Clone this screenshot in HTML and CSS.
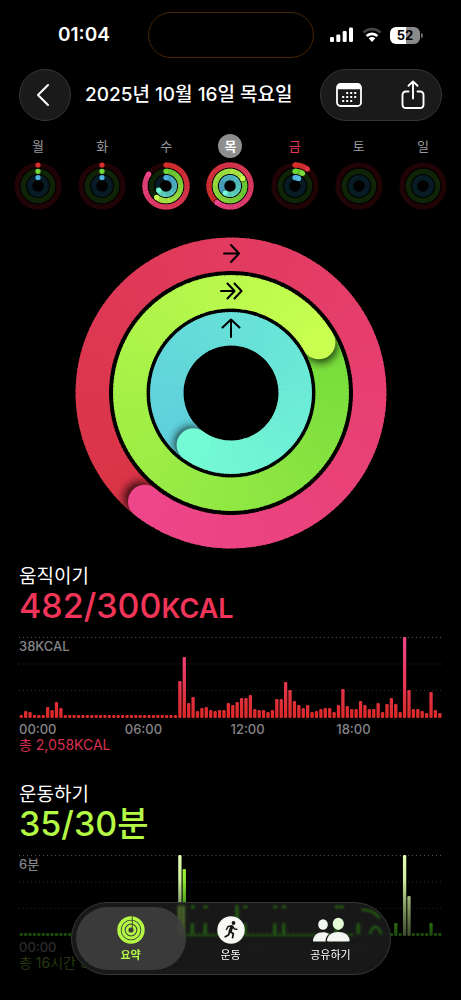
FILE: index.html
```html
<!DOCTYPE html>
<html lang="ko">
<head>
<meta charset="utf-8">
<meta name="viewport" content="width=device-width, initial-scale=1">
<title>활동 요약</title>
<link rel="stylesheet" href="styles.css">
</head>
<body>
<div class="app">
  <div class="status">
    <span class="clock">01:04</span>
    <span class="island"></span>
    <span class="indicators">
      <svg class="signal" width="24" height="16" viewBox="0 0 24 16" aria-hidden="true">
        <rect x="0" y="10" width="4" height="5" rx="1.3"/><rect x="6.3" y="7.5" width="4" height="7.5" rx="1.3"/><rect x="12.7" y="4" width="4" height="11" rx="1.3"/><rect x="19" y="0.5" width="4" height="14.500" rx="1.3"/>
      </svg>
      <svg class="wifi" width="20" height="16" viewBox="0 0 20 16" aria-hidden="true">
        <path d="M1.400 5.600A12.300 12.300 0 0 1 18.600 5.600" fill="none" stroke="#444" stroke-width="2.600"/>
        <path d="M4.600 9A7.700 7.700 0 0 1 15.400 9" fill="none" stroke="#fff" stroke-width="2.700"/>
        <path d="M6.600 11.300A4.900 4.900 0 0 1 13.400 11.300L10 15Z" fill="#fff"/>
      </svg>
      <span class="battery"><span class="battery-body">52</span><span class="battery-tip"></span></span>
    </span>
  </div>

  <header class="header">
    <button class="glass back" type="button" aria-label="뒤로">
      <svg width="14" height="24" viewBox="0 0 14 24" fill="none" stroke="#fff" stroke-width="2" stroke-linecap="round" stroke-linejoin="round"><path d="M12 2L2 12L12 22"/></svg>
    </button>
    <h1 class="date">2025년 10월 16일 목요일</h1>
    <div class="glass actions">
      <button class="action" type="button" aria-label="달력">
        <svg width="26" height="24" viewBox="0 0 26 24">
          <rect x="1" y="1" width="24" height="22" rx="3.500" fill="none" stroke="#fff" stroke-width="1.800"/>
          <path d="M1 6.300V4Q1 1 4 1H22Q25 1 25 4V6.300Z" fill="#fff"/>
          <g fill="#fff"><rect x="10.200" y="9" width="2" height="2"/><rect x="14.200" y="9" width="2" height="2"/><rect x="18.200" y="9" width="2" height="2"/><rect x="6.200" y="13" width="2" height="2"/><rect x="10.200" y="13" width="2" height="2"/><rect x="14.200" y="13" width="2" height="2"/><rect x="18.200" y="13" width="2" height="2"/><rect x="6.200" y="17" width="2" height="2"/><rect x="10.200" y="17" width="2" height="2"/><rect x="14.200" y="17" width="2" height="2"/></g>
        </svg>
      </button>
      <button class="action" type="button" aria-label="공유">
        <svg class="share" width="24" height="30" viewBox="0 0 24 30" fill="none" stroke="#fff" stroke-width="1.900" stroke-linecap="round" stroke-linejoin="round"><path d="M7.500 11.500H5Q1.500 11.500 1.500 15V24.500Q1.500 28 5 28H19Q22.500 28 22.500 24.500V15Q22.500 11.500 19 11.500H16.500M12 18.500V1.500M7.500 5.800L12 1.400L16.500 5.800"/></svg>
      </button>
    </div>
  </header>

  <nav class="week" aria-label="요일">
    <button class="day" type="button"><span class="day-name">월</span><svg class="mini" viewBox="0 0 48 48" data-rings="0,0,0"></svg></button>
    <button class="day" type="button"><span class="day-name">화</span><svg class="mini" viewBox="0 0 48 48" data-rings="0,0,0"></svg></button>
    <button class="day" type="button"><span class="day-name">수</span><svg class="mini" viewBox="0 0 48 48" data-rings="0.845,0.61,0.67"></svg></button>
    <button class="day selected" type="button" aria-current="date"><span class="day-name">목</span><svg class="mini" viewBox="0 0 48 48" data-rings="1.607,1.167,1.6"></svg></button>
    <button class="day today" type="button"><span class="day-name">금</span><svg class="mini" viewBox="0 0 48 48" data-rings="0.1,0.085,0.07"></svg></button>
    <button class="day" type="button"><span class="day-name">토</span><svg class="mini" viewBox="0 0 48 48" data-rings=""></svg></button>
    <button class="day" type="button"><span class="day-name">일</span><svg class="mini" viewBox="0 0 48 48" data-rings=""></svg></button>
  </nav>

  <main>
    <svg class="rings" viewBox="0 0 312 312" data-rings="1.607,1.167,1.6" role="img" aria-label="활동 링"></svg>

    <section class="metric move">
      <h2 class="metric-name">움직이기</h2>
      <p class="metric-value">482/300<span class="unit">KCAL</span></p>
      <div class="chart">
        <span class="chart-max">38KCAL</span>
        <svg class="plot" viewBox="0 0 422 82" preserveAspectRatio="none" data-chart="move"></svg>
      </div>
      <div class="axis"><span>00:00</span><span>06:00</span><span>12:00</span><span>18:00</span></div>
      <p class="total">총 2,058KCAL</p>
    </section>

    <section class="metric exercise">
      <h2 class="metric-name">운동하기</h2>
      <p class="metric-value">35/30분</p>
      <div class="chart">
        <span class="chart-max">6분</span>
        <svg class="plot" viewBox="0 0 422 82" preserveAspectRatio="none" data-chart="exercise"></svg>
      </div>
      <div class="axis"><span>00:00</span><span>06:00</span><span>12:00</span><span>18:00</span></div>
      <p class="total">총 16시간 35분</p>
    </section>
  </main>

  <div class="fade"></div>
  <nav class="tabs" aria-label="탭">
    <svg class="glints" viewBox="0 0 320 73" preserveAspectRatio="none" fill="none" stroke="#2c8a0e" stroke-linecap="round" aria-hidden="true">
      <path d="M121 4H122M134 4H135M174 4H175M204 4H205M213 4H214M266 4H267M271 4H272" stroke-width="3.500"/>
      <path d="M166 3V20M121 22V31M134 22V31M157 22V31M174 22V31M204 22V31M213 22V31M266 22V31M288 22V31" stroke-width="3"/>
      <path d="M110 33H284" stroke-width="3" stroke-dasharray="0.500 4"/>
      <path d="M108 4V30M112 4V30" stroke="#6f9c38" stroke-width="3"/>
      <path d="M300 31Q305 18 311 31M292 7Q303 7 309 15" stroke-width="2.500"/>
    </svg>
    <a class="tab active" href="#summary" aria-current="page">
      <svg width="28" height="28" viewBox="0 0 28 28" fill="none" stroke="#b4f944">
        <circle cx="14" cy="14" r="12" stroke-width="3.400"/><circle cx="14" cy="14" r="7.900" stroke-width="3"/><circle cx="14" cy="14" r="4" stroke-width="2.800"/>
        <path d="M15.300 0.500V13" stroke="#39401f" stroke-width="0.900"/>
      </svg>
      <span>요약</span>
    </a>
    <a class="tab" href="#workout">
      <svg width="28" height="28" viewBox="0 0 28 28">
        <circle cx="14" cy="14" r="13.700" fill="#f7f9f5"/>
        <circle cx="16.500" cy="7" r="1.900" fill="#151515"/>
        <g fill="none" stroke="#151515" stroke-linecap="round" stroke-linejoin="round"><path d="M14.800 10.700L13.200 15.200" stroke-width="3.200"/><path d="M14.500 10L11 10.500L9.500 13.500M16 10.700L17.300 13L19.800 13.300" stroke-width="1.500"/><path d="M13.300 15.500L16.300 17.700L15.600 21.600M12.600 15.800L11.500 19L8.200 20.700" stroke-width="1.800"/></g>
      </svg>
      <span>운동</span>
    </a>
    <a class="tab" href="#sharing">
      <svg width="38" height="28" viewBox="0 0 38 28" fill="#f4f7f1">
        <ellipse cx="11" cy="8.500" rx="4.800" ry="5.300"/><path d="M1 25.500C1 19.500 5.500 16.300 11 16.300C13.500 16.300 15.300 16.900 17 17.800C14.700 19.800 13.500 22.500 13.600 25.500H2.500Q1 25.500 1 25.500Z"/>
        <ellipse cx="26.300" cy="7.800" rx="5.600" ry="6.100" fill="#e4fbd6"/><path d="M15 24.300C15.300 19.500 20 16 26.300 16C32.700 16 37.300 19.500 37.600 24.300Q37.600 25.500 36.200 25.500H16.300Q15 25.500 15 24.300Z"/>
      </svg>
      <span>공유하기</span>
    </a>
  </nav>
</div>
<script src="app.js"></script>
</body>
</html>
```
FILE: styles.css
```css
* { box-sizing: border-box; }
body { margin: 0; background: #000; color: #fff; font-family: Inter, "Noto Sans CJK KR", sans-serif; }
h1, h2, p { margin: 0; }
button { border: 0; padding: 0; background: none; color: inherit; font: inherit; }
svg { display: block; }

.app { min-height: 100vh; }

.status { display: grid; grid-template-columns: 1fr 166px 1fr; height: 69px; padding-top: 12px; align-items: start; }
.clock { padding-left: 58px; font-size: 19px; line-height: 46px; font-weight: 600; }
.island { height: 46px; border: 1px solid #4a2604; border-radius: 23px; }
.indicators { display: flex; align-items: center; justify-content: flex-end; gap: 8px; height: 46px; padding-right: 38px; }
.signal { fill: #fff; }
.battery { display: flex; align-items: center; gap: 1px; }
.battery-body { width: 30px; height: 17px; border-radius: 6px; background: linear-gradient(90deg, #fff 52%, #8a8a8a 52%); color: #000; font-size: 13px; line-height: 17px; font-weight: 700; text-align: center; }
.battery-tip { width: 2px; height: 5px; border-radius: 0 2px 2px 0; background: #666; }

.header { display: flex; align-items: center; gap: 14px; padding: 0 19px; }
.glass { height: 52px; background: #1a1a1a; border: 1px solid #353535; border-radius: 26px; }
.back { width: 52px; display: grid; place-items: center; padding-right: 4px; }
.date { font-size: 19px; line-height: 28px; font-weight: 500; white-space: nowrap; }
.actions { display: grid; grid-template-columns: 1fr 1fr; width: 122px; margin-left: auto; }
.action { display: grid; place-items: center; padding-right: 4px; }
.action + .action { padding: 0 0 0 4px; }

.week { display: grid; grid-template-columns: repeat(7, 1fr); padding: 13px 6px 0; }
.day { display: flex; flex-direction: column; align-items: center; gap: 4px; color: #98989d; font-size: 13px; }
.day-name { width: 24px; line-height: 24px; border-radius: 12px; }
.mini { width: 48px; height: 48px; }
.selected .day-name { background: #8e8e8e; color: #fff; font-weight: 600; }
.today .day-name { color: #e8335a; }

.rings { width: 312px; margin: 27px auto 16px; }

.metric { padding: 0 19px; margin-bottom: 30px; }
.metric-name { font-size: 19px; line-height: 24px; font-weight: 400; }
.metric-value { font-size: 34px; line-height: 34px; height: 34px; font-weight: 500; margin-bottom: 14px; }
.unit { font-size: 27px; font-weight: 600; }
.move .metric-value { color: #f03558; }
.move .total { color: #d92f52; }
.exercise .metric-value { color: #b4f944; }
.exercise .total { color: #8dc63a; }
.chart { position: relative; }
.chart-max { position: absolute; top: 1px; left: 0; font-size: 13px; line-height: 16px; font-weight: 500; color: #858589; }
.plot { width: 100%; height: 82px; }
.axis { display: grid; grid-template-columns: repeat(4, 1fr); margin-top: 2px; font-size: 13px; line-height: 16px; font-weight: 500; color: #858589; }
.total { font-size: 14px; line-height: 16px; }

.fade { position: fixed; inset: auto 0 0; height: 120px; background: linear-gradient(transparent, rgba(0, 0, 0, .68) 50%, rgba(0, 0, 0, .8)); pointer-events: none; }
.tabs { position: fixed; bottom: 25px; left: 0; right: 0; width: 320px; height: 73px; margin: 0 auto; padding: 4px; display: grid; grid-template-columns: 110px 1fr 110px; background: rgba(27, 27, 27, .9); border: 1px solid #343b31; border-radius: 37px; backdrop-filter: blur(2px); }
.glints { position: absolute; inset: 0; width: 100%; height: 100%; filter: blur(1px); opacity: .6; }
.tab { position: relative; display: flex; flex-direction: column; align-items: center; padding-top: 9px; gap: 3px; color: #fff; font-size: 11px; line-height: 16px; text-decoration: none; }
.active { background: rgba(62, 62, 62, .9); border-radius: 32px; color: #b4f944; font-weight: 600; }
```
FILE: app.js
```js
const NS = "http://www.w3.org/2000/svg";

function add(parent, name, attrs) {
  const node = document.createElementNS(NS, name);
  for (const key in attrs) node.setAttribute(key, attrs[key]);
  parent.appendChild(node);
  return node;
}

const PALETTE = [
  { from: [217, 47, 42], to: [238, 70, 138], track: "#1f0305" },
  { from: [110, 216, 56], to: [200, 255, 80], track: "#0f2406" },
  { from: [80, 178, 226], to: [116, 250, 212], track: "#071b24" }
];

function mix(a, b, t) {
  return "rgb(" + a.map((v, i) => Math.round(v + (b[i] - v) * t)).join(",") + ")";
}

function point(c, r, turn) {
  const a = turn * 2 * Math.PI;
  return [c + r * Math.sin(a), c - r * Math.cos(a)];
}

let clipCount = 0;

function drawRing(svg, c, r, w, progress, colors) {
  const first = Math.max(0, progress - 1);
  const span = Math.max(0.5, progress - first);
  const shade = turn => mix(colors.from, colors.to, Math.min(1, (turn - first) / span));
  const arc = (a, b) => {
    const n = Math.max(1, Math.ceil((b - a) * 180));
    for (let i = 0; i < n; i++) {
      const s = a + (b - a) * i / n, e = Math.min(b, a + (b - a) * (i + 1) / n + 0.002);
      add(svg, "path", { d: `M${point(c, r, s)}A${r} ${r} 0 0 1 ${point(c, r, e)}`, fill: "none", stroke: shade(s), "stroke-width": w });
    }
  };
  const [sx, sy] = point(c, r, 0);
  if (progress <= 1) add(svg, "circle", { cx: sx, cy: sy, r: w / 2, fill: shade(0) });
  if (progress === 0) return;
  const split = Math.max(first, progress - 0.15);
  arc(first, Math.min(progress, split + 0.01));
  if (progress > 1) {
    const id = "band" + clipCount++;
    const clip = add(svg, "clipPath", { id });
    const o = r + w / 2, n = r - w / 2;
    add(clip, "path", {
      "clip-rule": "evenodd",
      d: `M${c - o} ${c}a${o} ${o} 0 1 0 ${2 * o} 0a${o} ${o} 0 1 0 ${-2 * o} 0M${c - n} ${c}a${n} ${n} 0 1 0 ${2 * n} 0a${n} ${n} 0 1 0 ${-2 * n} 0`
    });
    const group = add(svg, "g", { "clip-path": `url(#${id})` });
    const [hx, hy] = point(c, r, progress + 0.006);
    const shadow = add(group, "circle", { cx: hx, cy: hy, r: w / 2, fill: "#000", opacity: 0.75 });
    shadow.style.filter = `blur(${w / 8}px)`;
  }
  arc(split, progress);
  const [ex, ey] = point(c, r, progress);
  add(svg, "circle", { cx: ex, cy: ey, r: w / 2, fill: shade(progress) });
}

document.querySelectorAll(".mini").forEach(svg => {
  const values = svg.dataset.rings ? svg.dataset.rings.split(",").map(Number) : [];
  [21, 14.7, 8.4].forEach((r, i) => {
    add(svg, "circle", { cx: 24, cy: 24, r, fill: "none", stroke: PALETTE[i].track, "stroke-width": 5.2 });
    if (values.length) drawRing(svg, 24, r, 5.2, values[i], PALETTE[i]);
  });
});

const main = document.querySelector(".rings");
main.dataset.rings.split(",").map(Number).forEach((value, i) => {
  const colors = [
    { from: [217, 52, 68], to: [238, 70, 138] },
    { from: [118, 220, 60], to: [200, 255, 80] },
    { from: [94, 206, 220], to: [116, 250, 212] }
  ];
  drawRing(main, 156, [138.7, 101.2, 64.2][i], 33.4, value, colors[i]);
});
add(main, "path", {
  d: "M149 16.500H163.500M156 8L164 16.500L156 25M146 54H159M152.500 46.500L159.500 54L152.500 61.500M159.500 46.500L166.500 54L159.500 61.500M156 100V83M147.500 90.500L156 82.500L164.500 90.500",
  fill: "none", stroke: "#000", "stroke-width": 2, "stroke-linecap": "round", "stroke-linejoin": "round"
});

const move = [3, 7, 6, 3, 3, 3, 11, 8, 16, 10, ...Array(26).fill(3),
  37, 61, 15, 21, 7, 10, 11, 8, 7, 8, 8, 15, 13, 16, 20, 20, 23, 9, 8, 8, 6, 8, 19, 19, 36, 28, 17, 13, 10, 13,
  6, 7, 9, 10, 10, 6, 13, 29, 12, 9, 9, 17, 13, 9, 9, 15, 6, 14, 20, 14, 6, 81, 28, 9, 9, 7, 5, 26, 8, 5];
const exercise = Array(96).fill(3);
Object.entries({ 36: 81, 37: 67, 39: 13, 42: 13, 47: 13, 49: 27, 51: 13, 58: 13, 60: 13, 72: 13, 73: 13, 77: 13, 85: 13, 87: 81, 88: 40, 93: 13 })
  .forEach(([slot, height]) => { exercise[slot] = height; });

function drawChart(svg, values, stops, highlight) {
  const name = svg.dataset.chart;
  const defs = add(svg, "defs", {});
  const gradient = (id, list) => {
    const g = add(defs, "linearGradient", { id, gradientUnits: "userSpaceOnUse", x1: 0, y1: 81, x2: 0, y2: 0 });
    list.forEach((color, i) => add(g, "stop", { offset: i / (list.length - 1), "stop-color": color }));
  };
  gradient(name, stops);
  gradient(name + "-high", highlight || stops);
  [[0.5, "#5a5a5a"], [27, "#303030"], [53.5, "#303030"]].forEach(([y, stroke]) =>
    add(svg, "path", { d: `M0 ${y}H422`, stroke, "stroke-width": 1, "stroke-dasharray": "1 3" }));
  values.forEach((h, i) => {
    const tall = [36, 87, 88].includes(i) ? "-high" : "";
    add(svg, "rect", { x: 0.6 + i * 422 / 96, y: 81 - h, width: 3.3, height: h, rx: 1.2, fill: `url(#${name}${tall})` });
  });
}

drawChart(document.querySelector("[data-chart=move]"), move, ["#dc2a26", "#f0478c"]);
drawChart(document.querySelector("[data-chart=exercise]"), exercise, ["#43c416", "#b4f944"], ["#a5c878", "#e4ffb0"]);
```
